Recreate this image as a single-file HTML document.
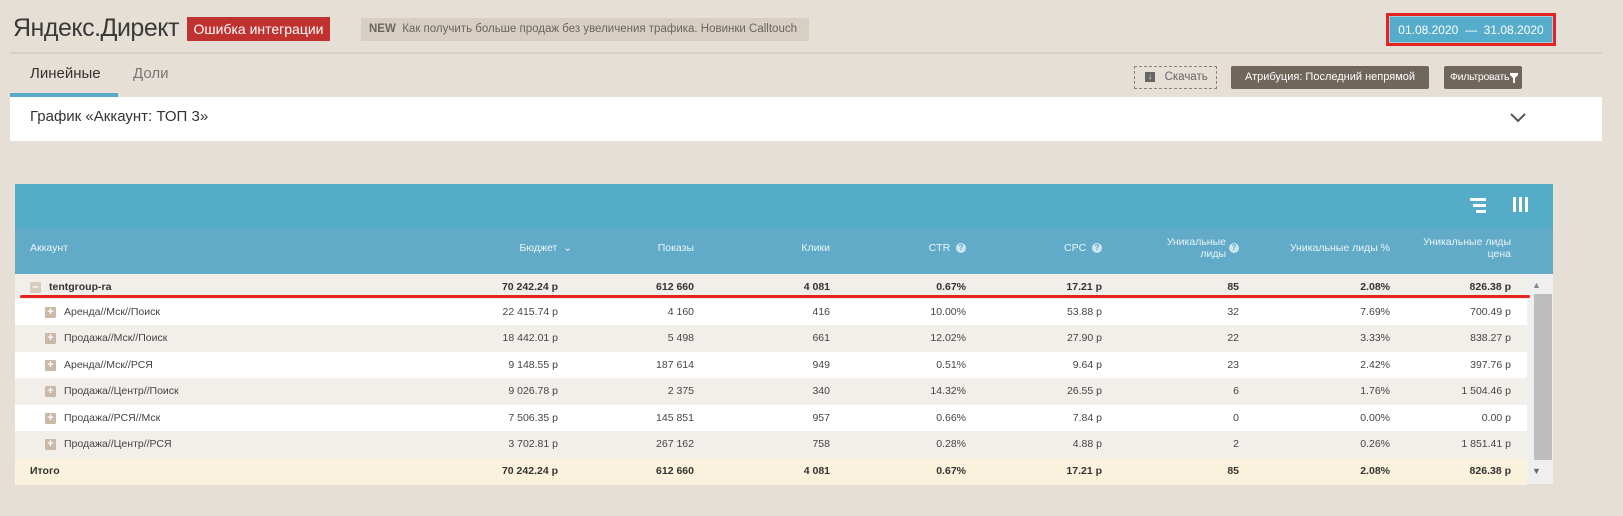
<!DOCTYPE html>
<html><head><meta charset="utf-8"><style>
*{margin:0;padding:0;box-sizing:border-box}
body{width:1623px;height:516px;background:#e6dfd6;font-family:"Liberation Sans","DejaVu Sans",sans-serif;position:relative;overflow:hidden;color:#333}
.a{position:absolute}
.title{left:13px;top:14px;font-size:25px;color:#3a3a3a;letter-spacing:-0.5px}
.err{left:187px;top:17px;width:143px;height:24px;background:#c0322f;color:#fff;font-size:14px;line-height:24px;text-align:center}
.new{left:361px;top:18px;width:448px;height:23px;background:#d7cfc3;color:#6b655e;font-size:11.5px;line-height:23px;padding-left:8px;white-space:nowrap;overflow:hidden}
.hr{left:10px;top:52px;width:1592px;height:2px;background:#d9d1c7}
.date{left:1386px;top:13px;width:170px;height:33px;border:3px solid #e52421}
.date div{margin:0;width:164px;height:27px;background:#56adcb;color:#fff;font-size:12px;line-height:26px;text-align:center;border:1px solid #9fd0e0}
.tab{top:65px;font-size:15px}
.ul{left:10px;top:93px;width:108px;height:5px;background:#5aa9c6}
.card{left:10px;top:97px;width:1592px;height:44px;background:#fff}
.btn{top:66px;height:23px;font-size:11px;line-height:23px;color:#fff;background:#6f665c;text-align:center;border-radius:2px;white-space:nowrap}
.dl{left:1134px;top:66px;width:83px;height:23px;border:1px dashed #8a8279;font-size:11.5px;line-height:21px;color:#666;padding-left:10px}
.thead{left:15px;top:184px;width:1538px;height:44px;background:#55acc9}
.thead2{left:15px;top:228px;width:1538px;height:46px;background:#62abc8}
.th{color:#e8f4f8;font-size:10.5px;text-align:right;line-height:12px}
.row{position:absolute;left:15px;width:1512px;height:27px;font-size:10.5px;color:#444}
.row span{position:absolute;top:0;line-height:26px;text-align:right}
.q{display:inline-block;width:10px;height:10px;border-radius:50%;background:#cfe6ef;color:#5aa9c6;font-size:8px;line-height:10px;text-align:center;font-weight:bold;vertical-align:middle}
.plus{position:absolute;left:30px;top:8px;width:11px;height:11px;background:#c9b9a6;border-radius:1px;color:#fff;font-size:11px;line-height:11px;text-align:center;font-weight:bold}
</style></head><body>
<div class="a title">Яндекс.Директ</div>
<div class="a err">Ошибка интеграции</div>
<div class="a new"><b style="font-weight:600">NEW</b>&nbsp; Как получить больше продаж без увеличения трафика. Новинки Calltouch</div>
<div class="a date"><div>01.08.2020 &nbsp;— &nbsp;31.08.2020</div></div>
<div class="a hr"></div>
<div class="a tab" style="left:30px;color:#333">Линейные</div>
<div class="a tab" style="left:133px;color:#777">Доли</div>
<div class="a ul"></div>
<div class="a dl"><span style="display:inline-block;width:10px;height:10px;background:#666;color:#fff;font-size:8px;line-height:10px;text-align:center;vertical-align:middle">↓</span>&nbsp;&nbsp; Скачать</div>
<div class="a btn" style="left:1231px;width:198px">Атрибуция: Последний непрямой</div>
<div class="a btn" style="left:1444px;width:78px;text-align:left;padding-left:6px;font-size:10.5px;letter-spacing:-0.3px">Фильтровать<svg style="position:absolute;left:66px;top:7px" width="8" height="10"><path d="M0 0H8V2L5 5V10H3V5L0 2Z" fill="#fff"/></svg></div>
<div class="a card"></div>
<div class="a" style="left:30px;top:108px;font-size:15px;color:#333">График «Аккаунт: ТОП 3»</div>
<svg class="a" style="left:1510px;top:113px" width="16" height="10"><path d="M1 1 L8 8 L15 1" stroke="#555" stroke-width="2" fill="none"/></svg>
<div class="a thead"></div>
<svg class="a" style="left:1470px;top:198px" width="18" height="16"><rect x="0" y="0" width="16" height="3" fill="#fff"/><rect x="3" y="6" width="13" height="3" fill="#fff"/><rect x="6" y="12" width="10" height="3" fill="#fff"/></svg>
<svg class="a" style="left:1513px;top:197px" width="16" height="16"><rect x="0" y="0" width="3" height="15" fill="#fff"/><rect x="6" y="0" width="3" height="15" fill="#fff"/><rect x="12" y="0" width="3" height="15" fill="#fff"/></svg>
<div class="a thead2"></div>
<div class="a th" style="left:30px;top:242px;text-align:left">Аккаунт</div>
<div class="a th" style="right:1051px;top:242px">Бюджет &nbsp;⌄</div>
<div class="a th" style="right:929px;top:242px">Показы</div>
<div class="a th" style="right:793px;top:242px">Клики</div>
<div class="a th" style="right:657px;top:242px">CTR &nbsp;<span class="q">?</span></div>
<div class="a th" style="right:521px;top:242px">CPC &nbsp;<span class="q">?</span></div>
<div class="a th" style="right:397px;top:236px">Уникальные<br>лиды</div>
<div class="a th" style="left:1229px;top:242px"><span class="q">?</span></div>
<div class="a th" style="right:233px;top:242px">Уникальные лиды %</div>
<div class="a th" style="right:112px;top:236px">Уникальные лиды<br>цена</div>
<div id="rows"></div>
<div class="a" style="left:1527px;top:274px;width:26px;height:210px;background:#efefef"></div>
<div class="a" style="left:1534px;top:294px;width:18px;height:166px;background:#bdbdbd"></div>
<div class="a" style="left:1532px;top:280px;font-size:9px;color:#888">▲</div>
<div class="a" style="left:1532px;top:466px;font-size:9px;color:#666">▼</div>
<div class="a" style="left:20px;top:295px;width:1510px;height:3px;background:#e52421;border-radius:2px"></div>
<script>
var d=[["tentgroup-ra","70 242.24 р","612 660","4 081","0.67%","17.21 р","85","2.08%","826.38 р",1,"#f2eee9"],
["Аренда//Мск//Поиск","22 415.74 р","4 160","416","10.00%","53.88 р","32","7.69%","700.49 р",0,"#fff"],
["Продажа//Мск//Поиск","18 442.01 р","5 498","661","12.02%","27.90 р","22","3.33%","838.27 р",0,"#f2eee9"],
["Аренда//Мск//РСЯ","9 148.55 р","187 614","949","0.51%","9.64 р","23","2.42%","397.76 р",0,"#fff"],
["Продажа//Центр//Поиск","9 026.78 р","2 375","340","14.32%","26.55 р","6","1.76%","1 504.46 р",0,"#f2eee9"],
["Продажа//РСЯ//Мск","7 506.35 р","145 851","957","0.66%","7.84 р","0","0.00%","0.00 р",0,"#fff"],
["Продажа//Центр//РСЯ","3 702.81 р","267 162","758","0.28%","4.88 р","2","0.26%","1 851.41 р",0,"#f2eee9"],
["Итого","70 242.24 р","612 660","4 081","0.67%","17.21 р","85","2.08%","826.38 р",2,"#fbf2de"]];
var tops=[274,299,325,352,378,405,431,458];
var R=[543,679,815,951,1087,1224,1375,1496];
var h="";
d.forEach(function(r,i){
 var b=r[9]?"font-weight:bold;color:#333;":"";
 h+='<div class="row" style="top:'+tops[i]+'px;background:'+r[10]+';'+b+'">';
 if(r[9]==1){h+='<div class="plus" style="left:15px;background:#d6cbbd">–</div><span style="left:34px;text-align:left">'+r[0]+'</span>';}
 else if(r[9]==2){h+='<span style="left:15px;text-align:left">'+r[0]+'</span>';}
 else {h+='<div class="plus">+</div><span style="left:49px;text-align:left">'+r[0]+'</span>';}
 for(var j=1;j<9;j++) h+='<span style="right:'+(1512-R[j-1])+'px">'+r[j]+'</span>';
 h+='</div>';
});
document.getElementById("rows").innerHTML=h;
</script>
</body></html>
